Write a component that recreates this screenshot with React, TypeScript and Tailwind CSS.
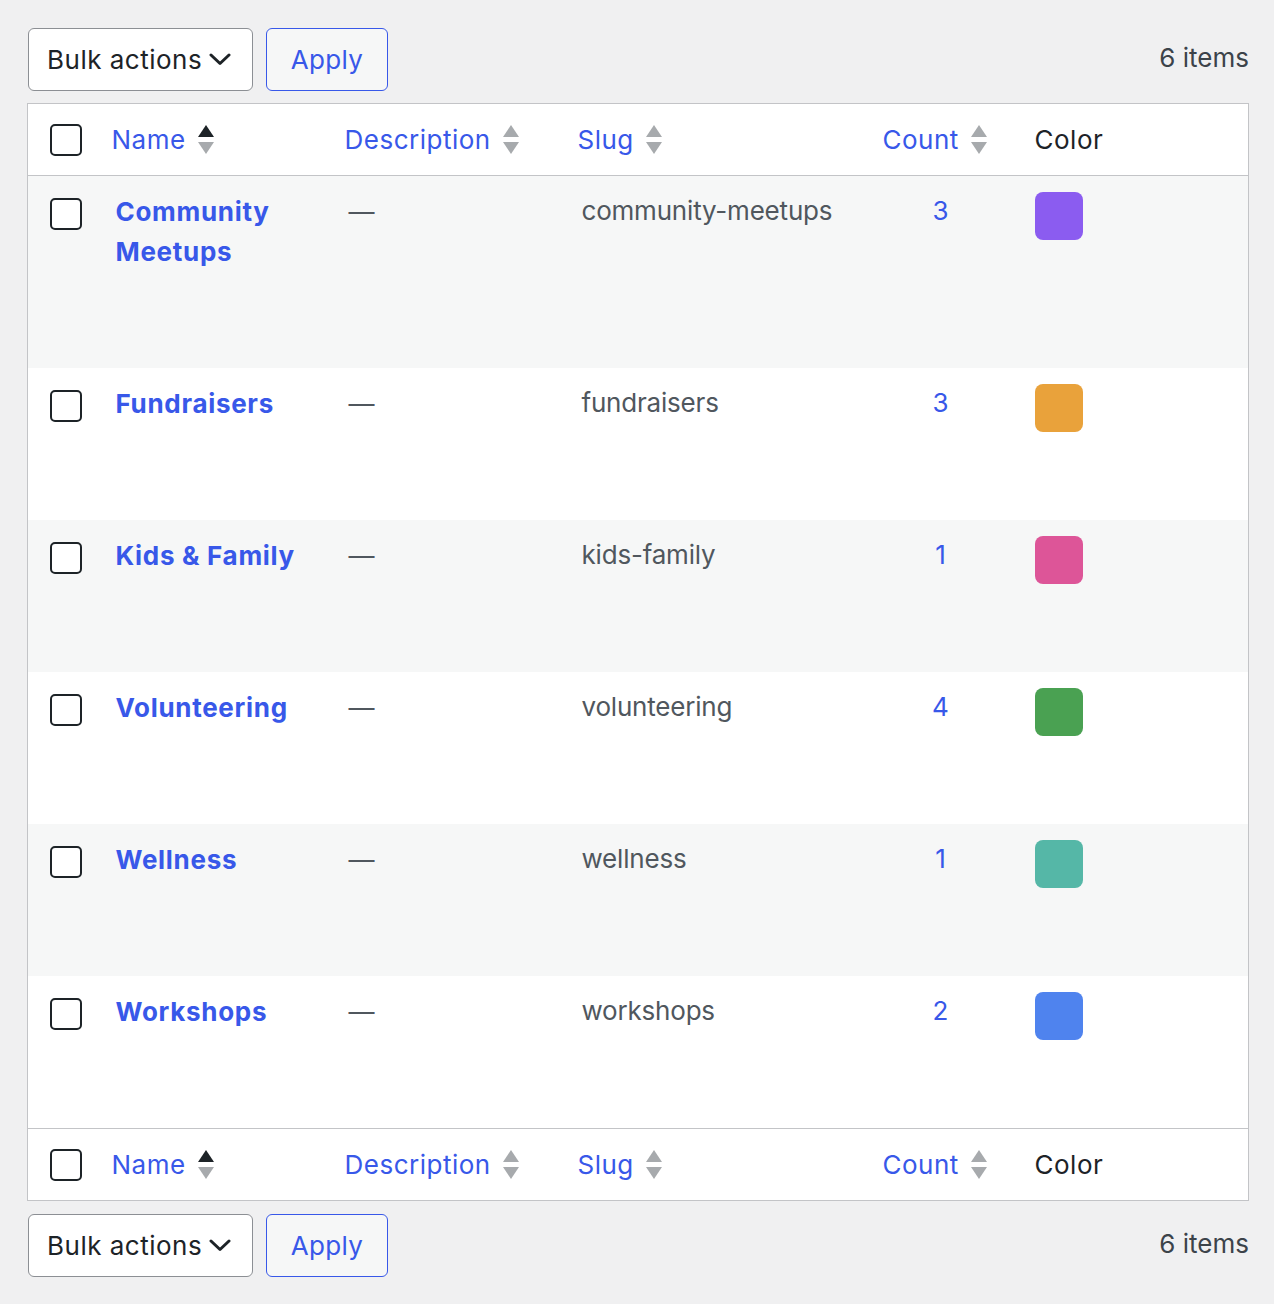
import React from "react";

const font = { fontFamily: "Inter, 'Noto Sans', 'Liberation Sans', sans-serif" };

type Term = { name: string; slug: string; count: number; color: string };

const terms: Term[] = [
  { name: "Community Meetups", slug: "community-meetups", count: 3, color: "bg-[#8b5cf0]" },
  { name: "Fundraisers", slug: "fundraisers", count: 3, color: "bg-[#e9a23b]" },
  { name: "Kids & Family", slug: "kids-family", count: 1, color: "bg-[#dd5598]" },
  { name: "Volunteering", slug: "volunteering", count: 4, color: "bg-[#4aa152]" },
  { name: "Wellness", slug: "wellness", count: 1, color: "bg-[#55b7a7]" },
  { name: "Workshops", slug: "workshops", count: 2, color: "bg-[#4f83ee]" },
];

function Checkbox() {
  return <span className="block w-[32px] h-[32px] rounded-[5px] border-2 border-[#1d2327] bg-white" />;
}

function SortArrows({ active }: { active?: boolean }) {
  return (
    <svg width="16" height="30" viewBox="0 0 16 30" className="shrink-0">
      <polygon points="8,0 16,12 0,12" fill={active ? "#1d2327" : "#a7aaad"} />
      <polygon points="0,17 16,17 8,29" fill="#a7aaad" />
    </svg>
  );
}

function SortHeader({ label, active }: { label: string; active?: boolean }) {
  return (
    <span className="inline-flex items-center gap-[12px] text-[#3858e9] tracking-[0.5px]">
      {label}
      <SortArrows active={active} />
    </span>
  );
}

function HeaderRow({ top }: { top?: boolean }) {
  return (
    <tr className={`h-[72px] bg-white ${top ? "border-b" : "border-t"} border-[#c3c4c7]`}>
      <td className="pl-[22px] align-middle">
        <Checkbox />
      </td>
      <td className="pl-[16px] align-middle">
        <SortHeader label="Name" active />
      </td>
      <td className="pl-[16px] align-middle">
        <SortHeader label="Description" />
      </td>
      <td className="pl-[16px] align-middle">
        <SortHeader label="Slug" />
      </td>
      <td className="pl-[16px] align-middle">
        <SortHeader label="Count" />
      </td>
      <td className="pl-[16px] align-middle text-[#1d2327] tracking-[0.5px]">Color</td>
    </tr>
  );
}

function ActionsBar() {
  return (
    <div className="flex items-center justify-between">
      <div className="flex items-center gap-[13px] pl-[1px]">
        <div className="flex items-center justify-between w-[225px] h-[63px] pl-[18px] pr-[21px] bg-white border-[1.5px] border-[#8c8f94] rounded-[6px] text-[#1d2327] tracking-[0.5px]">
          <span>Bulk actions</span>
          <svg width="22" height="13" viewBox="0 0 22 13" fill="none">
            <path d="M2 2 L11 10.5 L20 2" stroke="#1d2327" strokeWidth="3" strokeLinecap="round" strokeLinejoin="round" />
          </svg>
        </div>
        <div className="flex items-center justify-center w-[122px] h-[63px] bg-[#f6f7f7] border-[1.5px] border-[#3858e9] rounded-[6px] text-[#3858e9] tracking-[0.3px]">
          Apply
        </div>
      </div>
      <span className="text-[#3c434a] -mt-[4px]">6 items</span>
    </div>
  );
}

export default function App() {
  return (
    <div className="min-h-screen bg-[#f0f0f1] pl-[27px] pr-[25px] pt-[28px] text-[26px] leading-[40px]" style={font}>
      <ActionsBar />
      <table className="w-[1222px] mt-[12px] mb-[13px] table-fixed border-collapse border border-[#c3c4c7]">
        <colgroup>
          <col className="w-[68px]" />
          <col className="w-[233px]" />
          <col className="w-[233px]" />
          <col className="w-[305px]" />
          <col className="w-[152px]" />
          <col />
        </colgroup>
        <thead>
          <HeaderRow top />
        </thead>
        <tbody>
          {terms.map((t, i) => (
            <tr key={t.slug} className={i % 2 === 0 ? "bg-[#f6f7f7]" : "bg-white"}>
              <td className="pl-[22px] pt-[22px] align-top">
                <Checkbox />
              </td>
              <td className="pl-[20px] pr-[8px] pt-[16px] pb-[96px] align-top font-bold text-[#3858e9] tracking-[0.7px]">
                {t.name}
              </td>
              <td className="pl-[20px] pt-[16px] align-top text-[#50575e]">—</td>
              <td className="pl-[20px] pt-[15px] align-top text-[#50575e] tracking-[-0.2px]">{t.slug}</td>
              <td className="pt-[15px] pr-[4px] align-top text-center text-[#3858e9]">{t.count}</td>
              <td className="pl-[16px] pt-[16px] align-top">
                <span className={`block w-[48px] h-[48px] rounded-[8px] ${t.color}`} />
              </td>
            </tr>
          ))}
        </tbody>
        <tfoot>
          <HeaderRow />
        </tfoot>
      </table>
      <ActionsBar />
    </div>
  );
}
